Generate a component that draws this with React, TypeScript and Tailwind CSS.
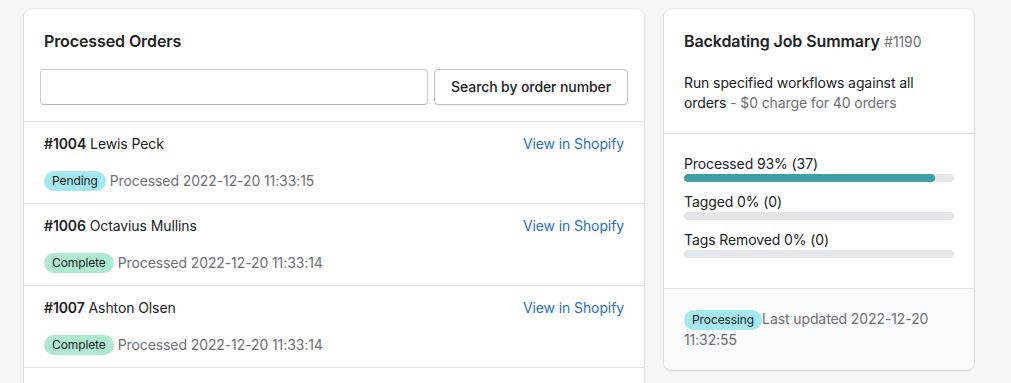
const orders = [
  { num: "#1004", name: "Lewis Peck", status: "Pending", at: "2022-12-20 11:33:15" },
  { num: "#1006", name: "Octavius Mullins", status: "Complete", at: "2022-12-20 11:33:14" },
  { num: "#1007", name: "Ashton Olsen", status: "Complete", at: "2022-12-20 11:33:14" },
];

const bars = [
  { label: "Processed 93% (37)", pct: 93 },
  { label: "Tagged 0% (0)", pct: 0 },
  { label: "Tags Removed 0% (0)", pct: 0 },
];

function Badge({ status }: { status: string }) {
  const color = status === "Complete" ? "bg-[#aee9d1]" : "bg-[#a4e8f2]";
  return (
    <span className={`inline-flex h-5 items-center rounded-full px-2 text-xs text-[#202223] ${color}`}>
      {status}
    </span>
  );
}

export default function App() {
  return (
    <main className="flex min-h-screen items-start gap-5 bg-[#f6f6f7] pl-6 pt-[9px] font-['Inter',sans-serif] text-sm leading-5 tracking-[-0.1px] text-[#202223]">
      <section className="w-[620px] shrink-0 rounded-lg bg-white pb-10 shadow-[0_0_0_1px_rgba(63,63,68,0.05),0_1px_3px_rgba(63,63,68,0.15)]">
        <h2 className="px-5 pt-5 text-base leading-6 font-semibold">Processed Orders</h2>
        <div className="flex gap-[6px] border-b border-[#e1e3e5] p-4">
          <input className="h-9 flex-1 rounded border border-[#c9cccf] border-b-[#aeb4b9] px-3 outline-none" />
          <button className="h-9 rounded border border-[#babfc3] px-4 font-medium text-[#202223] shadow-[0_1px_0_rgba(0,0,0,0.05)]">
            Search by order number
          </button>
        </div>
        <ul>
          {orders.map((o) => (
            <li key={o.num} className="border-b border-[#e1e3e5] px-5 py-3">
              <div className="flex items-center justify-between">
                <span>
                  <span className="font-semibold">{o.num}</span> {o.name}
                </span>
                <a className="text-[#2c6ecb]">View in Shopify</a>
              </div>
              <div className="mt-[17px] flex items-center gap-1">
                <Badge status={o.status} />
                <span className="text-[#6d7175]">Processed {o.at}</span>
              </div>
            </li>
          ))}
        </ul>
      </section>

      <section className="w-[310px] shrink-0 overflow-hidden rounded-lg bg-white shadow-[0_0_0_1px_rgba(63,63,68,0.05),0_1px_3px_rgba(63,63,68,0.15)]">
        <div className="p-5">
          <h2 className="text-base leading-6">
            <span className="font-semibold">Backdating Job Summary</span>{" "}
            <span className="text-sm text-[#6d7175]">#1190</span>
          </h2>
          <p className="mt-5">
            Run specified workflows against all orders{" "}
            <span className="text-[#6d7175]">- $0 charge for 40 orders</span>
          </p>
        </div>
        <div className="border-t border-[#e1e3e5] p-5">
          {bars.map((b) => (
            <div key={b.label} className="mb-2.5">
              <div>{b.label}</div>
              <div className="h-2 overflow-hidden rounded-full bg-[#e4e5e7]">
                <div className="h-full rounded-full bg-[#3d9ea6]" style={{ width: `${b.pct}%` }} />
              </div>
            </div>
          ))}
        </div>
        <div className="border-t border-[#e1e3e5] bg-[#fafbfb] p-5 text-[#6d7175]">
          <Badge status="Processing" />
          Last updated 2022-12-20 11:32:55
        </div>
      </section>
    </main>
  );
}
